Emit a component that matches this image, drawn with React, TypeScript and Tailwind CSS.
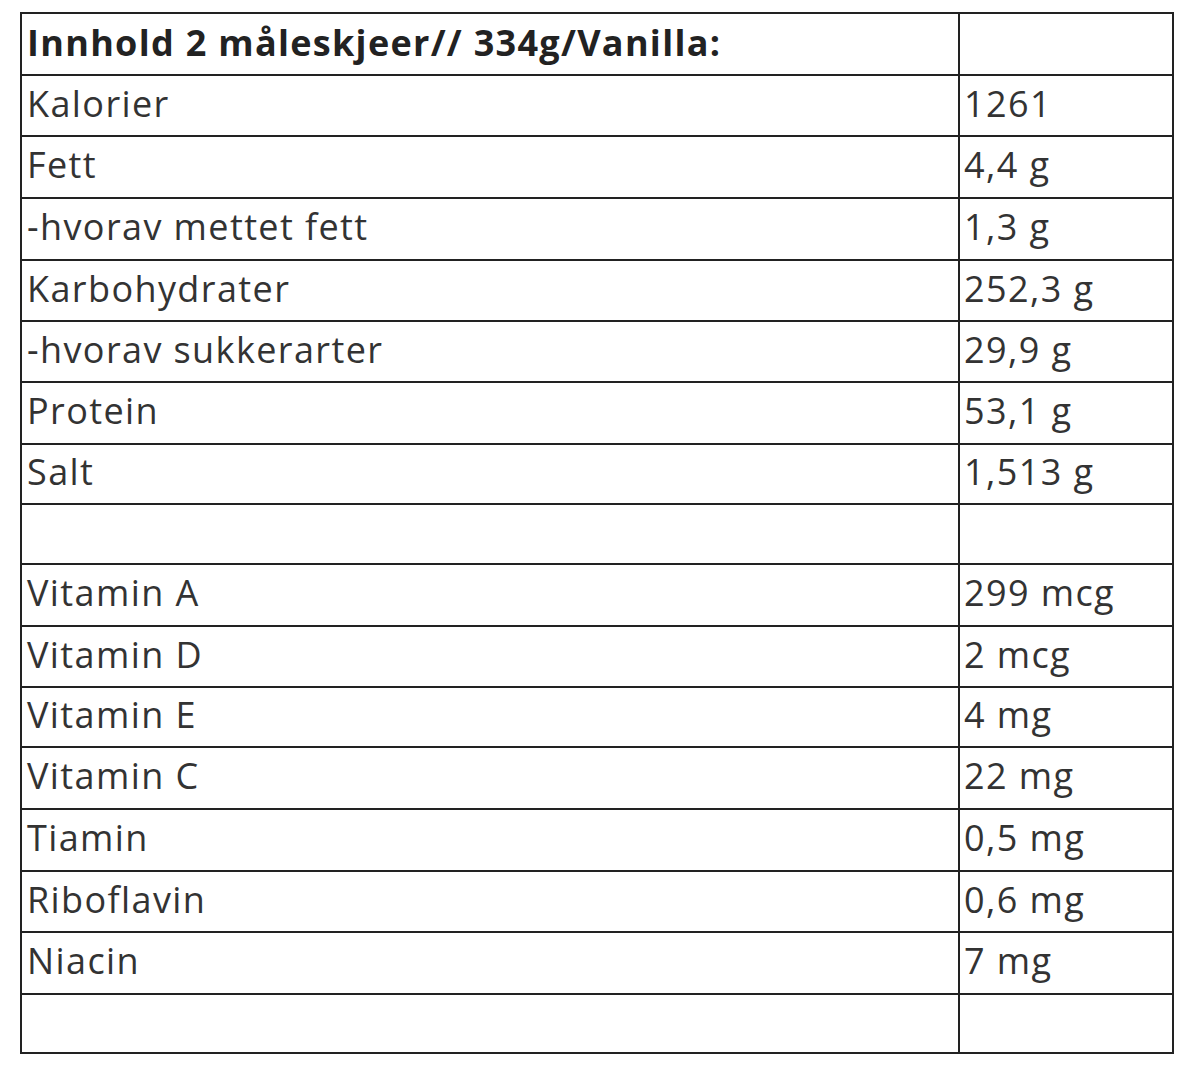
const rows: [string, string, string][] = [
  ["Kalorier", "1261", "h-[61px]"],
  ["Fett", "4,4 g", "h-[62px]"],
  ["-hvorav mettet fett", "1,3 g", "h-[62px]"],
  ["Karbohydrater", "252,3 g", "h-[61px]"],
  ["-hvorav sukkerarter", "29,9 g", "h-[61px]"],
  ["Protein", "53,1 g", "h-[62px]"],
  ["Salt", "1,513 g", "h-[60px]"],
  ["", "", "h-[60px]"],
  ["Vitamin A", "299 mcg", "h-[62px]"],
  ["Vitamin D", "2 mcg", "h-[61px]"],
  ["Vitamin E", "4 mg", "h-[60px]"],
  ["Vitamin C", "22 mg", "h-[62px]"],
  ["Tiamin", "0,5 mg", "h-[62px]"],
  ["Riboflavin", "0,6 mg", "h-[61px]"],
  ["Niacin", "7 mg", "h-[62px]"],
  ["", "", "h-[59px]"],
];

export default function App() {
  return (
    <div className="min-h-screen bg-white pl-[20px] pt-[12px] font-['Open_Sans',sans-serif] text-[#333333]">
      <table className="w-[1154px] table-fixed border-collapse border-2 border-[#222222]">
        <colgroup>
          <col className="w-[938px]" />
          <col />
        </colgroup>
        <tbody>
          <tr className="h-[62px]">
            <td className="border-2 border-[#222222] pl-[5px] pb-[3px] align-middle text-[36px] font-bold leading-none tracking-[1.3px] text-[#222222]">
              Innhold 2 måleskjeer// 334g/Vanilla:
            </td>
            <td className="border-2 border-[#222222]" />
          </tr>
          {rows.map(([label, value, h], i) => (
            <tr key={i} className={h}>
              <td className="border-2 border-[#222222] pl-[5px] pb-[4px] align-middle text-[36px] leading-none tracking-[1.4px]">
                {label}
              </td>
              <td className="border-2 border-[#222222] pl-[4px] pb-[4px] align-middle text-[36px] leading-none tracking-[1.4px]">
                {value}
              </td>
            </tr>
          ))}
        </tbody>
      </table>
    </div>
  );
}
